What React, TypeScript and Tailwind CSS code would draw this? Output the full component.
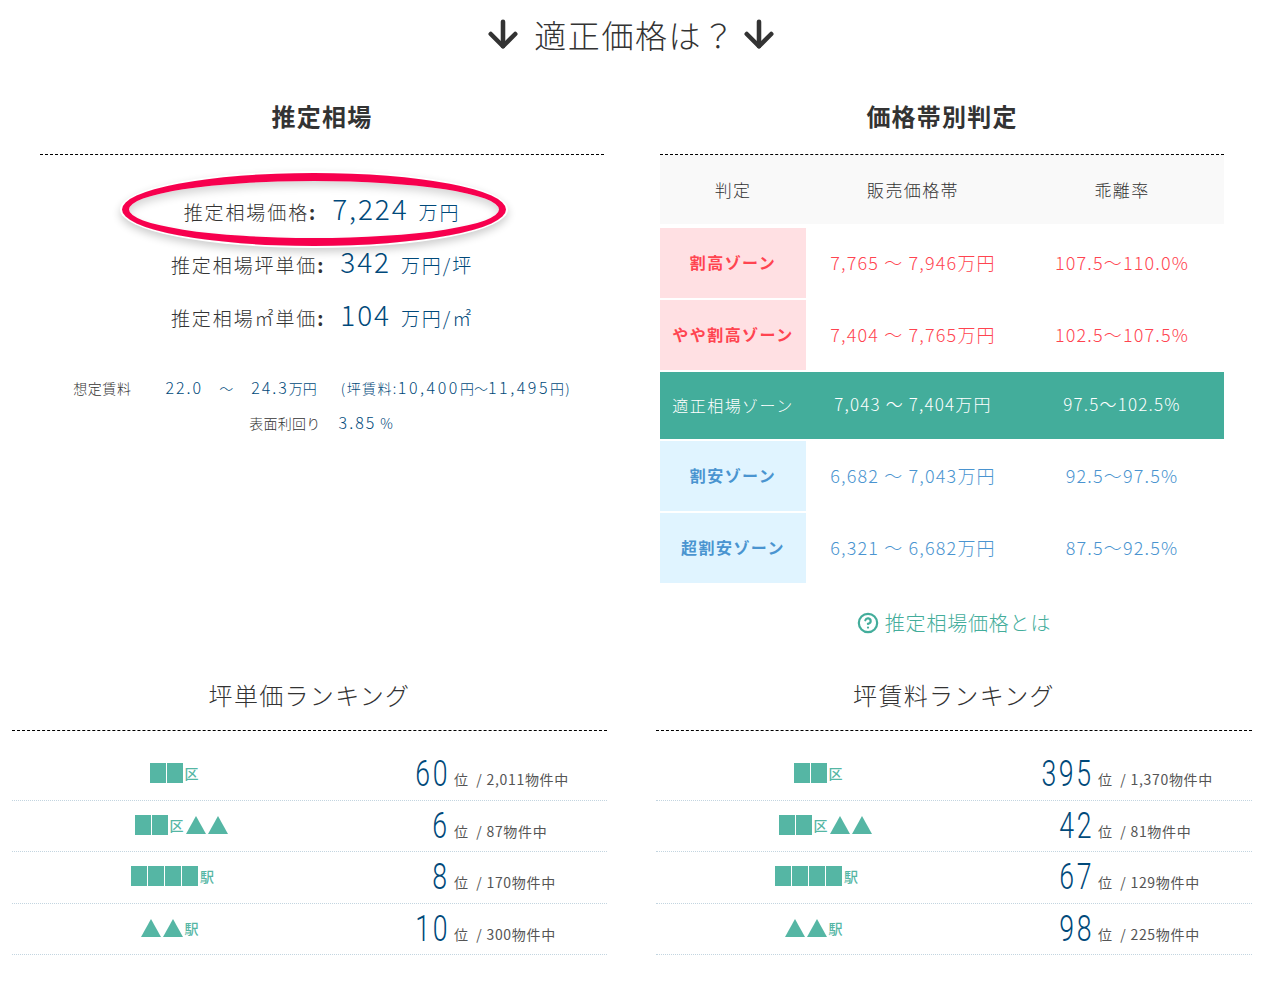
import { ArrowDown, CircleHelp } from "lucide-react";

type RankRow = { blocks: number; tris: number; tail: string; shift: string; rank: string; total: string };

const zones = [
  { name: "割高ゾーン", price: "7,765 〜 7,946万円", rate: "107.5〜110.0%", tone: "red" },
  { name: "やや割高ゾーン", price: "7,404 〜 7,765万円", rate: "102.5〜107.5%", tone: "red" },
  { name: "適正相場ゾーン", price: "7,043 〜 7,404万円", rate: "97.5〜102.5%", tone: "green" },
  { name: "割安ゾーン", price: "6,682 〜 7,043万円", rate: "92.5〜97.5%", tone: "blue" },
  { name: "超割安ゾーン", price: "6,321 〜 6,682万円", rate: "87.5〜92.5%", tone: "blue" },
];

const tsuboPrice: RankRow[] = [
  { blocks: 2, tris: 0, tail: "区", shift: "", rank: "60", total: "2,011" },
  { blocks: 2, tris: 2, tail: "区", shift: "pl-[13px]", rank: "6", total: "87" },
  { blocks: 4, tris: 0, tail: "駅", shift: "pr-[3px]", rank: "8", total: "170" },
  { blocks: 0, tris: 2, tail: "駅", shift: "pr-[9px]", rank: "10", total: "300" },
];

const tsuboRent: RankRow[] = [
  { blocks: 2, tris: 0, tail: "区", shift: "", rank: "395", total: "1,370" },
  { blocks: 2, tris: 2, tail: "区", shift: "pl-[13px]", rank: "42", total: "81" },
  { blocks: 4, tris: 0, tail: "駅", shift: "pr-[3px]", rank: "67", total: "129" },
  { blocks: 0, tris: 2, tail: "駅", shift: "pr-[9px]", rank: "98", total: "225" },
];

function Triangle() {
  return (
    <svg width="20" height="18" viewBox="0 0 20 18" className="block">
      <polygon points="10,0 20,18 0,18" fill="#55b6a4" />
    </svg>
  );
}

function MaskedName({ row }: { row: RankRow }) {
  return (
    <div className={`flex items-center justify-center pb-0.5 ${row.shift}`}>
      {Array.from({ length: row.blocks }).map((_, i) => (
        <span key={i} className="w-4 h-5 mr-px bg-[#55b6a4]" />
      ))}
      {row.tris > 0 && row.blocks === 0 && (
        <span className="flex gap-0.5 mr-px">
          <Triangle />
          <Triangle />
        </span>
      )}
      <span className="text-sm font-medium text-[#55b6a4] ml-px mr-px">{row.tail}</span>
      {row.tris > 0 && row.blocks > 0 && (
        <span className="flex gap-0.5 ml-px">
          <Triangle />
          <Triangle />
        </span>
      )}
    </div>
  );
}

function Ranking({ title, rows, className }: { title: string; rows: RankRow[]; className: string }) {
  return (
    <section className={className}>
      <h3 className="h-[56px] pt-[3px] text-center text-2xl leading-[36px] tracking-[0.055em] font-light text-[#333]">{title}</h3>
      <div className="border-t border-dashed border-black pt-[18px]">
        {rows.map((row) => (
          <div key={row.rank} className="grid grid-cols-[325px_110px_1fr] h-[51.5px] items-center border-b border-dotted border-[#c3d5e0]">
            <MaskedName row={row} />
            <div className="text-right text-[#00497a]">
              <span className="inline-block -mr-[3px] origin-right scale-x-[0.74] font-['Roboto',sans-serif] font-light text-[36px] leading-[40px] tracking-[0.1em]">{row.rank}</span>
            </div>
            <div className="pl-[7px] pt-[10px] text-sm text-[#555] tracking-[0.05em] whitespace-nowrap">
              位 &nbsp;/ {row.total}物件中
            </div>
          </div>
        ))}
      </div>
    </section>
  );
}

function PriceLine({ label, value, unit }: { label: string; value: string; unit: string }) {
  return (
    <p className="h-[53px] flex items-baseline justify-center tracking-[0.1em] text-[#333] text-[19px] leading-[53px] font-light">
      <span>{label}<span className="font-bold">:</span></span>
      <span className="ml-[15px] text-[28px] text-[#00497a]">{value}</span>
      <span className="ml-[10px] text-[#00497a]">{unit}</span>
    </p>
  );
}

export default function App() {
  return (
    <div className="w-[1266px] h-[986px] bg-white overflow-hidden font-['Noto_Sans_CJK_JP','Noto_Sans',sans-serif] text-[#333]">
      <h1 className="h-[68px] flex items-center justify-center pr-1 text-[32px] tracking-[0.05em] font-light">
        <ArrowDown size={42} strokeWidth={2.6} className="mr-[10px]" />
        <span>適正価格は？</span>
        <ArrowDown size={42} strokeWidth={2.6} className="ml-[2px]" />
      </h1>

      <div className="grid grid-cols-[564px_564px] gap-x-14 px-10">
        <section>
          <h2 className="h-[86px] pt-[30px] text-center text-2xl leading-[36px] font-bold tracking-[0.05em]">推定相場</h2>
          <div className="border-t border-dashed border-black pt-[27px] relative">
            <div className="absolute left-[82px] top-[18px] w-[384px] h-[73px] rounded-[50%] border-x-[7px] border-y-[8px] border-[#f7004e] shadow-[0_0_0_2px_#fff,0_4px_9px_2px_rgba(0,0,0,0.2),inset_0_5px_8px_rgba(0,0,0,0.16)]" />
            <PriceLine label="推定相場価格" value="7,224" unit="万円" />
            <PriceLine label="推定相場坪単価" value="342" unit="万円/坪" />
            <PriceLine label="推定相場㎡単価" value="104" unit="万円/㎡" />
            <div className="mt-[29px] flex items-baseline justify-center text-[#00497a] text-base tracking-[0.125em] font-light leading-[35px] whitespace-nowrap">
              <span className="text-sm tracking-[0.04em] text-[#333] mr-[34px]">想定賃料</span>
              <span>22.0</span>
              <span className="mx-[16px] text-sm">〜</span>
              <span>24.3</span>
              <span className="text-sm tracking-normal">万円</span>
              <span className="ml-[24px] text-sm tracking-[0.1em]">(坪賃料:</span>
              <span className="tracking-[0.16em]">10,400</span>
              <span className="text-sm tracking-normal">円〜</span>
              <span className="tracking-[0.16em]">11,495</span>
              <span className="text-sm tracking-[0.08em]">円)</span>
            </div>
            <div className="flex items-baseline justify-center text-[#00497a] text-base tracking-[0.125em] font-light leading-[35px]">
              <span className="text-sm tracking-[0.02em] text-[#333] mr-[18px]">表面利回り</span>
              <span>3.85</span>
              <span className="ml-1 text-sm">%</span>
            </div>
          </div>
        </section>

        <section>
          <h2 className="h-[86px] pt-[30px] text-center text-2xl leading-[36px] font-bold tracking-[0.05em]">価格帯別判定</h2>
          <div className="border-t border-dashed border-black grid grid-cols-[146px_214px_204px] text-center text-lg tracking-[0.065em]">
            <div className="col-span-3 grid grid-cols-subgrid h-[69px] pt-0.5 items-center bg-[#f9f9f9] text-[17px] tracking-[0.08em] font-light mb-1">
              <span>判定</span>
              <span>販売価格帯</span>
              <span>乖離率</span>
            </div>
            {zones.map((zone) => {
              const isGreen = zone.tone === "green";
              const text = zone.tone === "red" ? "text-[#ff4450]" : zone.tone === "blue" ? "text-[#4a94d0]" : "text-white text-[17px]";
              const head = zone.tone === "red" ? "bg-[#ffe0e3] font-bold" : zone.tone === "blue" ? "bg-[#e0f4ff] font-bold" : "font-light";
              return (
                <div key={zone.name} className={`col-span-3 grid grid-cols-subgrid items-center mb-0.5 font-light ${isGreen ? "h-[67px] bg-[#43ad9b]" : "h-[70px]"} ${text}`}>
                  <div className={`h-full pb-0.5 flex items-center justify-center text-base tracking-[0.09em] whitespace-nowrap ${head}`}>{zone.name}</div>
                  <div className="pb-0.5">{zone.price}</div>
                  <div className="pb-0.5">{zone.rate}</div>
                </div>
              );
            })}
            <a className="col-span-3 mt-[22px] pl-[24px] flex items-center justify-center gap-[6px] text-[20px] tracking-[0.04em] font-light text-[#43ad9b]">
              <CircleHelp size={22} strokeWidth={2.4} />
              推定相場価格とは
            </a>
          </div>
        </section>
      </div>

      <div className="flex mt-[36px]">
        <Ranking title="坪単価ランキング" rows={tsuboPrice} className="ml-3 w-[595px]" />
        <Ranking title="坪賃料ランキング" rows={tsuboRent} className="ml-[49px] w-[596px]" />
      </div>
    </div>
  );
}
